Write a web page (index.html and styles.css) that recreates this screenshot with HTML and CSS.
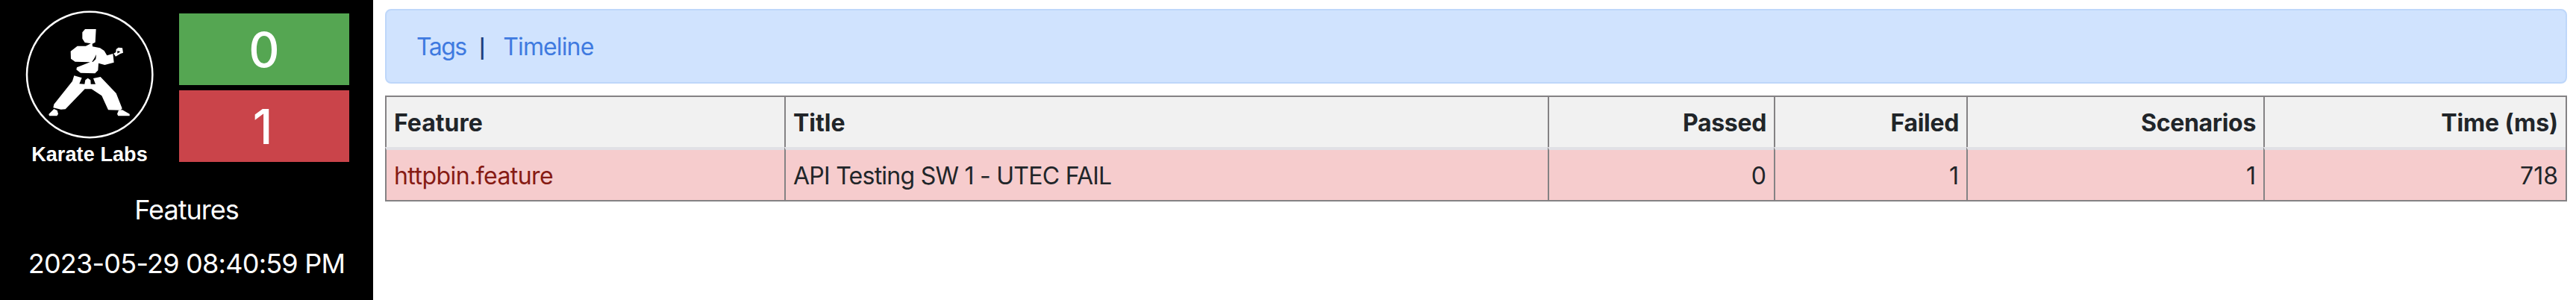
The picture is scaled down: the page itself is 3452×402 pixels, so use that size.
FILE: index.html
```html
<!DOCTYPE html>
<html lang="en">
<head>
<meta charset="utf-8">
<title>Karate Summary Report</title>
<link rel="stylesheet" href="styles.css">
</head>
<body>
<div class="page">
  <aside class="sidebar">
    <div class="summary">
      <div class="brand">
        <svg class="logo" viewBox="0 0 516 516" aria-hidden="true">
          <g transform="translate(-102 -43)">
          <circle cx="360.500" cy="301" r="252.500" fill="none" stroke="#fff" stroke-width="7.500"/>
          <g fill="#fff">
            <path d="M342 118L386 118L383 171L371 177L372 188L402 194L419 205L430 224L454 217L458 252L421 262L396 255L394 284L382 296L324 294L307 281L309 272L362 251L302 249L285 237L284 207L311 186L345 186L365 176L341 172L331 156L331 131Z"/>
            <path d="M457 216L466 211L467 199L476 192L492 194L495 213L484 217L465 228Z"/>
            <path d="M298 305L329 314L319 338L340 339L343 323L353 315L364 323L365 339L384 339L375 316L404 310L467 376L491 437L485 444L435 443L409 386L368 359L341 359L263 440L245 441L214 434L217 420L291 327Z"/>
            <path d="M217 439L230 445L234 459L229 467L198 467L196 460Z"/>
            <path d="M477 444L492 443L521 459L521 467L475 467L471 459Z"/>
          </g>
          <path d="M387 220L385 239L373 250L370 249Q380 236 387 220ZM472 205L484 209L472 216Z" fill="#000"/>
          </g>
        </svg>
        <div class="brand-name">Karate Labs</div>
      </div>
      <div class="counts">
        <div class="count passed">0</div>
        <div class="count failed">1</div>
      </div>
    </div>
    <div class="side-label features">Features</div>
    <div class="side-label date">2023-05-29 08:40:59 PM</div>
  </aside>
  <main class="content">
    <nav class="alert"><a class="tags">Tags</a><span class="pipe">|</span><a class="timeline">Timeline</a></nav>
    <table class="report">
      <colgroup><col class="c1"><col class="c2"><col class="c3"><col class="c4"><col class="c5"><col class="c6"></colgroup>
      <thead><tr><th>Feature</th><th>Title</th><th class="num">Passed</th><th class="num">Failed</th><th class="num">Scenarios</th><th class="num time">Time (ms)</th></tr></thead>
      <tbody><tr><td class="file">httpbin.feature</td><td class="title">API Testing SW 1 - UTEC FAIL</td><td class="num">0</td><td class="num">1</td><td class="num">1</td><td class="num">718</td></tr></tbody>
    </table>
  </main>
</div>
</body>
</html>
```
FILE: styles.css
```css
* { box-sizing: border-box; }
body {
  margin: 0;
  background: #fff;
  color: #212529;
  font: 430 32px/48px Inter, "Liberation Sans", sans-serif;
}
.page { display: flex; height: 402px; }
.sidebar {
  width: 500px;
  background: #000;
  color: #fff;
  font-size: 36px;
  line-height: 54px;
  text-align: center;
}
.summary { display: flex; padding: 14px 32px 0 34px; height: 254px; }
.brand { width: 206px; }
.logo { display: block; width: 172px; height: 172px; }
.brand-name {
  width: 172px;
  margin-top: 5px;
  font: bold 27px/32px "Liberation Sans", sans-serif;
  letter-spacing: 0.1px;
  white-space: nowrap;
}
.counts { flex: 1; padding-top: 4px; }
.count { height: 96px; font-size: 64px; line-height: 97px; text-align: center; font-weight: 450; }
.count.passed { background: #55a652; margin-bottom: 7px; }
.count.failed { background: #ca444a; padding-right: 4px; }
.side-label { height: 72px; white-space: nowrap; }
.features { letter-spacing: -0.97px; }
.date { letter-spacing: -0.76px; }
.content { flex: 1; padding: 12px 12px 0 16px; }
.alert {
  height: 100px;
  margin-bottom: 16px;
  padding: 24.500px 40px 0;
  background: #d0e3fe;
  border: 2px solid #bed7fa;
  border-radius: 8px;
  display: flex;
  align-items: baseline;
}
.alert a { color: #3f7ae0; }
.tags { letter-spacing: -1.55px; }
.timeline { letter-spacing: -0.88px; }
.pipe { width: 9px; color: #1c3f7c; font-size: 25px; font-weight: 600; margin: 0 23.500px 0 17.200px; }
.report {
  width: 2924px;
  table-layout: fixed;
  border-collapse: separate;
  border-spacing: 0;
  border: solid #848284;
  border-width: 2px 2px 2px 0;
}
.c1 { width: 535px; }
.c2 { width: 1023px; }
.c3 { width: 303px; }
.c4 { width: 258px; }
.c5 { width: 398px; }
.c6 { width: 405px; }
th, td { padding: 2px 10px 0; height: 67px; text-align: left; white-space: nowrap; border-left: 2px solid #848284; }
th { background: #f1f1f1; font-weight: 700; }
td { background: #f6cccd; }
tbody td { height: 71px; border-top: 4px solid #e1e1e6; }
.num { text-align: right; }
th.num { letter-spacing: -0.32px; }
th.time { letter-spacing: -0.1px; }
.file { color: #861b14; letter-spacing: -0.56px; }
.title { letter-spacing: -0.74px; }
```
